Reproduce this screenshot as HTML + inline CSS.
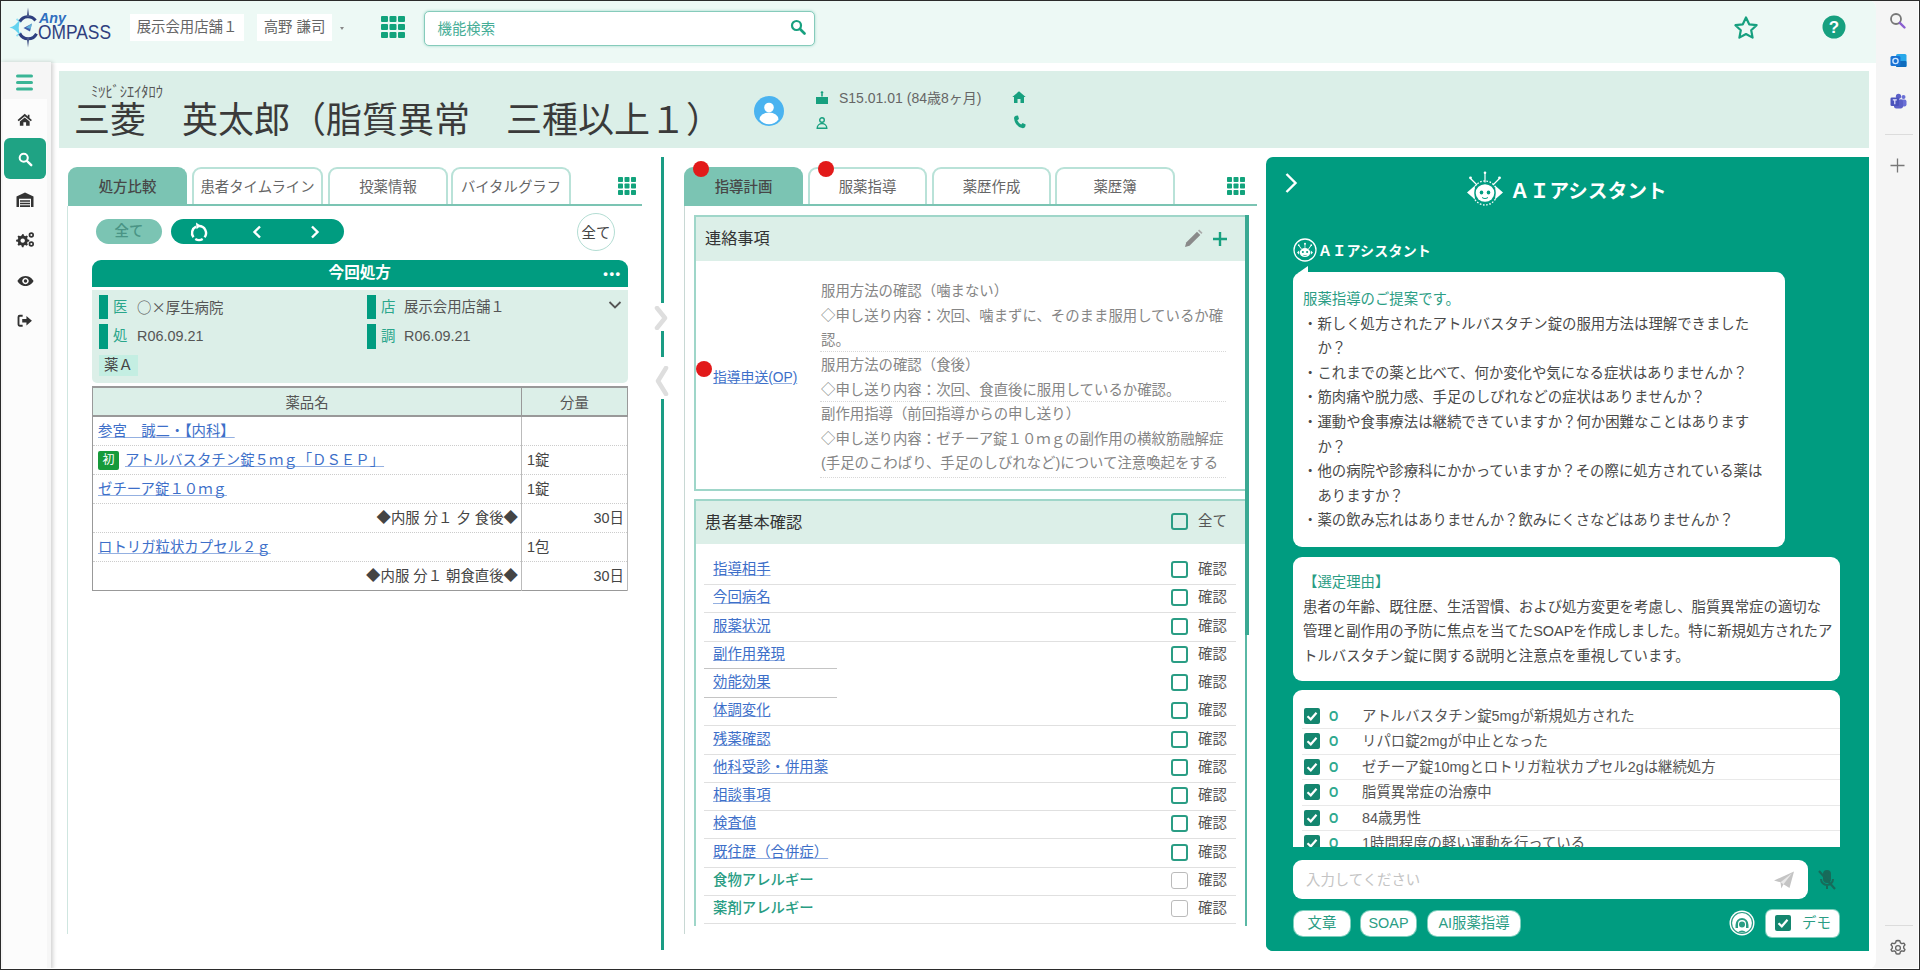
<!DOCTYPE html>
<html lang="ja">
<head>
<meta charset="utf-8">
<title>AnyCOMPASS</title>
<style>
*{box-sizing:border-box;margin:0;padding:0}
html,body{width:1920px;height:970px;overflow:hidden;background:#fff}
body{font-family:"Liberation Sans","Noto Sans CJK JP",sans-serif;color:#555;font-size:14.4px;position:relative}
.abs{position:absolute}
#frame{position:absolute;left:0;top:0;width:1920px;height:970px;border:1px solid #2b2b2b;border-top-width:1.500px;box-shadow:inset -1px -1px 0 #fff;z-index:50;pointer-events:none}
/* top bar */
#topbar{left:0;top:0;width:1876px;height:62.500px;background:#edf9f5;border-radius:0 8px 0 0}
#rightbar{left:1860px;top:0;width:60px;height:970px;background:#f5f5f5}
#pagebg{left:0;top:0;width:1876px;height:969px;background:#fff;border-radius:0 8px 8px 0}
#leftbar{left:0;top:62px;width:51px;height:908px;background:#f6f6f6;box-shadow:2px 0 4px rgba(0,0,0,.18)}
.chip{background:#fff;color:#666;font-size:14.4px;height:27px;line-height:27px;text-align:center;top:14px}
#search{left:424px;top:10.500px;width:391px;height:35.500px;border:1.500px solid #86cbbb;border-radius:5px;background:#fff;box-shadow:0 0 3px #9fd8ca}
#search span{position:absolute;left:12.500px;top:1.500px;line-height:33px;font-size:14.4px;color:#45ad96}
/* patient header */
#phead{left:59px;top:70.500px;width:1810px;height:77.500px;background:#dbefe8}
#kana{left:91px;top:82px;font-size:14.4px;color:#555;line-height:20px}
#pname{left:74px;top:95px;font-size:36px;line-height:52px;color:#3a3a3a;white-space:pre}

/* icons */
.ico{position:absolute}
#sb-active{left:4px;top:138px;width:42px;height:41px;border-radius:6px;background:#1fa384}
#sb-white{left:3px;top:99px;width:44px;height:871px;background:#fcfcfc}

/* tabs */
.tab{position:absolute;top:167px;height:38px;border:2px solid #b9e2d8;border-bottom:none;border-radius:9px 9px 0 0;background:#fff;color:#666;font-size:14.4px;text-align:center;line-height:36px;white-space:nowrap}
.tab.on{background:#7bc4b3;border-color:#7bc4b3;color:#474747;font-weight:500}
.tabline{position:absolute;top:204px;height:2px;background:#7bc4b3}
.grid9{position:absolute;width:18px;height:18px}
/* left panel */
#lp-border{left:67px;top:206px;width:1px;height:728px;background:#cfe6e0}
.pill{position:absolute;top:219px;height:25px;border-radius:13px}
#rx-head{left:92px;top:259.500px;width:535.500px;height:27px;background:#009c80;border-radius:9px 9px 0 0;color:#fff;font-weight:bold;font-size:15.600px;text-align:center;line-height:26px}
#rx-info{left:92px;top:290px;width:536px;height:93px;background:#dcefe8;border-radius:0 0 5px 5px}
.gbar{position:absolute;width:9px;height:24px;background:#009c80}
.lbl{position:absolute;font-size:14.4px;color:#2aa68b;line-height:20px}
.val{position:absolute;font-size:14.4px;color:#555;line-height:20px;white-space:nowrap}
#rx-table{left:92px;top:386px;width:536px;border-collapse:collapse;font-size:14.4px;color:#444;table-layout:fixed}
#rx-table th{background:#dcefe8;height:29px;font-weight:normal;color:#555;border:1px solid #999;border-top:2px solid #999;border-bottom:2px solid #999}
#rx-table td{height:28.700px;border-bottom:1px dotted #ccc;border-right:1px solid #bbb;padding:0 5px;white-space:nowrap;line-height:28px}
#rx-table td.r{text-align:right;padding-right:3px}
#rx-table{border:1px solid #999}
#rx-table a{color:#3d6fc9;text-decoration:underline;text-decoration-color:rgba(61,111,201,.55)}
.hatsu{display:inline-block;width:21px;height:19px;line-height:19px;background:#169a3a;color:#fff;font-size:12px;text-align:center;border-radius:2px;margin-right:6px;vertical-align:middle;position:relative;top:-1px}

/* divider */
.dv{position:absolute;left:661px;width:3px;background:#1a9c84}
/* middle panel */
.reddot{position:absolute;width:16px;height:16px;border-radius:50%;background:#e21a1a}
.sec{position:absolute;left:694px;width:553px;border:2px solid #9fd6c9;border-right:2px solid #5ab8a5;background:#fff}
.sec-h{position:absolute;left:0;top:0;right:0;height:43.500px;background:#dcefe8;color:#333;font-size:16.2px;line-height:43px;padding-left:9px}
.memo{position:absolute;left:821px;font-size:14.4px;color:#858585;white-space:nowrap;line-height:24.600px}
.dot-sep{position:absolute;left:820px;width:406px;border-top:1px dotted #d8d8d8;height:0}
.lnk{position:absolute;left:713px;font-size:14.4px;color:#3d6fc9;text-decoration:underline;text-decoration-color:rgba(61,111,201,.55);white-space:nowrap;line-height:20px}
.lnk.g{color:#2a9d84;text-decoration:none;font-weight:500}
.cb{position:absolute;left:1171px;width:17px;height:17px;border:2px solid #2a9d84;border-radius:3px;background:transparent}
.cb.gy{border:1px solid #bbb}
.kk{position:absolute;left:1198px;font-size:14.4px;color:#555;line-height:20px}
.rsep{position:absolute;left:704px;width:532px;height:1px;background:#e0e0e0}

/* AI panel */
#ai{left:1266px;top:157px;width:603px;height:794px;background:#009c80;border-radius:7px 0 0 7px}
.bub{position:absolute;background:#fff;border-radius:9px}
.ait{position:absolute;font-size:14.4px;line-height:24.600px;color:#4a4a4a;white-space:nowrap}
.ait .t{color:#2a9d84}
.ckrow{position:absolute;left:1293px;width:547px;height:25.500px}
.ckrow:after{content:"";position:absolute;left:9px;right:0;bottom:0;height:1px;background:#e9e9e9}
.ckb{position:absolute;left:11px;top:4px;width:16px;height:16px;background:#14866f;border-radius:2px}
.cko{position:absolute;left:36px;top:0;line-height:25px;color:#2fa88e;font-size:14px;font-weight:bold;transform:scaleX(.85);transform-origin:left}
.ckt{position:absolute;left:69px;top:0;line-height:25px;color:#555;font-size:14.4px;white-space:nowrap}
.aib{position:absolute;top:911px;height:25px;background:#fff;border-radius:9px;color:#2a9d84;font-size:14.4px;line-height:24px;text-align:center;box-shadow:0 0 0 1px #7fcfbd}
</style>
</head>
<body>
<div id="rightbar" class="abs"></div>
<div id="pagebg" class="abs"></div>
<div id="topbar" class="abs"></div>
<div id="leftbar" class="abs"></div>


<!-- LEFT SIDEBAR -->
<div id="sb-white" class="abs"></div>
<svg class="ico" style="left:16px;top:74px" width="17" height="17" viewBox="0 0 17 17"><g fill="#3bb596"><rect x="0" y="0.5" width="17" height="3" rx="1.5"/><rect x="0" y="7" width="17" height="3" rx="1.5"/><rect x="0" y="13.5" width="17" height="3" rx="1.5"/></g></svg>
<svg class="ico" style="left:17px;top:113px" width="15.500" height="13.500" viewBox="0 0 18 16"><path d="M9 1 L0.5 8.3 L1.8 9.8 L9 3.8 L16.2 9.8 L17.5 8.3 L14.6 5.8 V2 H12.6 V4.1 Z" fill="#333"/><path d="M9 5.3 L3.2 10.1 V15 H7.4 V11 H10.6 V15 H14.8 V10.1 Z" fill="#333"/></svg>
<div id="sb-active" class="abs"></div>
<svg class="ico" style="left:17.500px;top:152px" width="15" height="15" viewBox="0 0 17 17"><circle cx="6.5" cy="6.5" r="4.6" fill="none" stroke="#fff" stroke-width="2.3"/><path d="M10.2 10.2 L15 15" stroke="#fff" stroke-width="2.8" stroke-linecap="round"/></svg>
<svg class="ico" style="left:16px;top:192px" width="18" height="15.500" viewBox="0 0 18 17" preserveAspectRatio="none"><path d="M9 0.5 L0.5 5 V16.5 H3 V7.5 H15 V16.5 H17.5 V5 Z" fill="#333"/><path d="M4 9 H14 V10.6 H4 Z M4 11.8 H14 V13.4 H4 Z M4 14.6 H14 V16.5 H4 Z" fill="#333"/></svg>
<svg class="ico" style="left:16px;top:231px" width="19" height="17" viewBox="0 0 19 17"><g fill="#333"><path d="M6.5 3 l1 0 l.4 1.6 l1.3 .6 l1.5 -.8 l1.2 1.2 l-.8 1.5 l.6 1.3 l1.6 .4 v1.6 l-1.6 .4 l-.6 1.3 l.8 1.5 l-1.2 1.2 l-1.5 -.8 l-1.3 .6 l-.4 1.6 h-1.6 l-.4 -1.6 l-1.3 -.6 l-1.5 .8 l-1.2 -1.2 l.8 -1.5 l-.6 -1.3 l-1.6 -.4 v-1.6 l1.600 -.4 l.6 -1.3 l-.8 -1.5 l1.2 -1.2 l1.500 .8 l1.300 -.6 z M6.700 7.400 a2.200 2.200 0 1 0 .01 0 z" fill-rule="evenodd"/><circle cx="15.300" cy="4" r="2.700"/><circle cx="15.300" cy="13" r="2.700"/></g><circle cx="15.300" cy="4" r="1" fill="#fcfcfc"/><circle cx="15.300" cy="13" r="1" fill="#fcfcfc"/></svg>
<svg class="ico" style="left:16.500px;top:274.500px" width="17" height="12" viewBox="0 0 20 14"><path d="M10 1 C5 1 1.800 4.500 0.500 7 C1.800 9.500 5 13 10 13 C15 13 18.200 9.500 19.500 7 C18.200 4.500 15 1 10 1 Z M10 3.200 a3.800 3.800 0 1 1 -.01 0 Z" fill="#333" fill-rule="evenodd"/><circle cx="10" cy="7" r="2" fill="#333"/></svg>
<svg class="ico" style="left:16.500px;top:314px" width="15.500" height="13.500" viewBox="0 0 18 16"><path d="M6.500 1 H3 a2.500 2.500 0 0 0 -2.500 2.500 V12.500 A2.500 2.500 0 0 0 3 15 H6.500 V12.800 H3.300 a.6 .6 0 0 1 -.6 -.6 V3.800 a.6 .6 0 0 1 .6 -.6 H6.500 Z" fill="#333"/><path d="M11 2.500 L17.500 8 L11 13.500 V10 H6 V6 H11 Z" fill="#333"/></svg>
<!-- TOPBAR CONTENT -->
<div class="abs chip" style="left:130px;width:114px">展示会用店舗１</div>
<div class="abs chip" style="left:257px;width:75px">高野 謙司</div>
<div class="abs" style="left:340px;top:27px;width:0;height:0;border-left:2.500px solid transparent;border-right:2.500px solid transparent;border-top:3.500px solid #888"></div>

<!-- logo -->
<svg class="ico" style="left:8px;top:6px" width="108" height="44" viewBox="0 0 108 44">
 <path d="M1.500 21.500 Q8 20 11.500 13.500 Q10 21.500 11.500 29.500 Q8 23 1.500 21.500 Z" fill="#63d3f0"/>
 <path d="M8.500 13 l4.500 3.500 M8.500 30 l4.500 -3.500" stroke="#8fe0f4" stroke-width="1.800"/>
 <g fill="none" stroke="#2f3f7f" stroke-width="3">
  <path d="M11.800 15.500 A9.300 9.300 0 0 1 27.500 14.500"/>
  <path d="M11.800 27.500 A9.300 9.300 0 0 0 28.500 27.800"/>
 </g>
 <path d="M20 1.500 L21.300 11 L18.700 11 Z M20 41.500 L21.300 32 L18.700 32 Z" fill="#4a5a8a"/>
 <path d="M15.500 22 l8.500 -4.500 l-2 8 z" fill="#3f5fa8"/>
 <path d="M18 21.500 l6 -4 l-1.500 5.500 z" fill="#6fd6f0" opacity=".7"/>
 <text x="31" y="16.500" font-family="Liberation Sans, sans-serif" font-size="14" font-weight="bold" font-style="italic" fill="#2f6fc0" textLength="27" lengthAdjust="spacingAndGlyphs">Any</text>
 <text x="30" y="32.500" font-family="Liberation Sans, sans-serif" font-size="21" fill="#2f3f7f" textLength="73" lengthAdjust="spacingAndGlyphs">OMPASS</text>
</svg>
<!-- grid icon -->
<svg class="ico" style="left:381px;top:16px" width="24" height="22" viewBox="0 0 24 22"><g fill="#12a37c">
<rect x="0" y="0" width="7" height="6" rx="1"/><rect x="8.5" y="0" width="7" height="6" rx="1"/><rect x="17" y="0" width="7" height="6" rx="1"/>
<rect x="0" y="8" width="7" height="6" rx="1"/><rect x="8.5" y="8" width="7" height="6" rx="1"/><rect x="17" y="8" width="7" height="6" rx="1"/>
<rect x="0" y="16" width="7" height="6" rx="1"/><rect x="8.5" y="16" width="7" height="6" rx="1"/><rect x="17" y="16" width="7" height="6" rx="1"/></g></svg>
<!-- star -->
<svg class="ico" style="left:1733px;top:15px" width="26" height="25" viewBox="0 0 26 25"><path d="M13 2.5 L16.2 9.3 L23.6 10.2 L18.2 15.3 L19.6 22.6 L13 19 L6.4 22.6 L7.8 15.3 L2.4 10.2 L9.8 9.3 Z" fill="none" stroke="#17a07f" stroke-width="2.2" stroke-linejoin="round"/></svg>
<!-- help -->
<svg class="ico" style="left:1822px;top:15px" width="24" height="24" viewBox="0 0 24 24"><circle cx="12" cy="12" r="11.5" fill="#17a07f"/><text x="12" y="18" text-anchor="middle" font-family="Liberation Sans, sans-serif" font-weight="bold" font-size="17" fill="#fff">?</text></svg>
<div id="search" class="abs"><span>機能検索</span></div>
<!-- search icon in box -->
<svg class="ico" style="left:790px;top:19px" width="16" height="16" viewBox="0 0 16 16"><circle cx="6.5" cy="6.5" r="4.5" fill="none" stroke="#17a07f" stroke-width="2.2"/><path d="M10 10 L14.5 14.5" stroke="#17a07f" stroke-width="2.6" stroke-linecap="round"/></svg>



<!-- RIGHT BROWSER BAR -->
<svg class="ico" style="left:1889px;top:12px" width="18" height="18" viewBox="0 0 18 18"><circle cx="7" cy="7" r="5" fill="none" stroke="#777" stroke-width="1.800"/><path d="M10.800 10.800 L15.500 15.500" stroke="#8a5fd0" stroke-width="2.400" stroke-linecap="round"/></svg>
<svg class="ico" style="left:1890px;top:53px" width="17" height="16" viewBox="0 0 17 16"><rect x="6" y="1" width="10.500" height="13" rx="1.500" fill="#28a8ea"/><rect x="6" y="8" width="10.500" height="6" rx="1" fill="#0f6cbd"/><rect x="0.500" y="3" width="10" height="10" rx="1.500" fill="#1a73d4"/><circle cx="5.500" cy="8" r="2.600" fill="none" stroke="#cfe6ff" stroke-width="1.400"/></svg>
<svg class="ico" style="left:1890px;top:93px" width="17" height="16" viewBox="0 0 17 16"><circle cx="13.500" cy="4" r="2" fill="#6a6fd6"/><circle cx="8.500" cy="3.300" r="2.600" fill="#5b5fc7"/><rect x="9" y="6.500" width="7.500" height="7" rx="2" fill="#6a6fd6"/><rect x="4" y="6.500" width="9" height="9" rx="2.200" fill="#5b5fc7"/><rect x="0.500" y="4.500" width="8.500" height="8.500" rx="1.300" fill="#4b53bc"/><path d="M2.800 6.800 h4 M4.800 6.800 v4.500" stroke="#e8e8ff" stroke-width="1.200"/></svg>
<div class="abs" style="left:1885px;top:134px;width:28px;height:1px;background:#dcdcdc"></div>
<svg class="ico" style="left:1890px;top:158px" width="15" height="15" viewBox="0 0 15 15"><path d="M7.500 0.500 V14.500 M0.500 7.500 H14.500" stroke="#777" stroke-width="1.300"/></svg>
<div class="abs" style="left:1885px;top:925px;width:28px;height:1px;background:#dcdcdc"></div>
<svg class="ico" style="left:1889px;top:939px" width="18" height="18" viewBox="0 0 18 18"><path d="M9 1.500 l1.800 .3 l.6 2 l1.500 .9 l2 -.6 l1.100 1.700 l-1.300 1.600 v1.700 l1.300 1.600 l-1.100 1.700 l-2 -.6 l-1.500 .9 l-.6 2 l-1.800 .3 l-1.800 -.3 l-.6 -2 l-1.500 -.9 l-2 .6 l-1.100 -1.700 l1.300 -1.600 v-1.700 l-1.300 -1.600 l1.100 -1.700 l2 .6 l1.500 -.9 l.6 -2 z" fill="none" stroke="#666" stroke-width="1.400" stroke-linejoin="round"/><circle cx="9" cy="9" r="2.400" fill="none" stroke="#666" stroke-width="1.300"/></svg>
<!-- PATIENT HEADER -->
<div id="phead" class="abs"></div>
<div id="kana" class="abs">ﾐﾂﾋﾞｼｴｲﾀﾛｳ</div>
<div id="pname" class="abs">三菱　英太郎（脂質異常　三種以上１）</div>


<svg class="ico" style="left:754px;top:96px" width="30" height="30" viewBox="0 0 30 30"><circle cx="15" cy="15" r="15" fill="#4ab3f0"/><circle cx="15" cy="11.500" r="4.800" fill="#fff"/><path d="M5.500 23.500 a9.500 7 0 0 1 19 0 a12 12 0 0 1 -19 0z" fill="#fff"/></svg>
<svg class="ico" style="left:815px;top:91px" width="14" height="13" viewBox="0 0 14 13"><path d="M1 6 h12 v7 h-12z M6.200 2.500 h1.600 v3 h-1.600z" fill="#17a07f"/><circle cx="7" cy="1.500" r="1.300" fill="#17a07f"/></svg>
<div class="abs" style="left:839px;top:88px;font-size:14px;color:#666;line-height:20px;white-space:nowrap">S15.01.01 (84歳8ヶ月)</div>
<svg class="ico" style="left:816px;top:117px" width="12" height="12" viewBox="0 0 12 12"><circle cx="6" cy="3" r="2.300" fill="none" stroke="#17a07f" stroke-width="1.400"/><path d="M1.200 11.300 a4.800 4.800 0 0 1 9.600 0z" fill="none" stroke="#17a07f" stroke-width="1.400"/></svg>
<svg class="ico" style="left:1012px;top:91px" width="14" height="12" viewBox="0 0 14 12"><path d="M7 0.300 L0.300 6 H2 V12 H5.500 V8 H8.500 V12 H12 V6 H13.700 Z" fill="#17a07f"/></svg>
<svg class="ico" style="left:1013px;top:115px" width="13" height="14" viewBox="0 0 13 14"><path d="M2.800 0.800 L5 0.500 L6 4 L4.300 5.200 Q5.500 8 8.200 9.600 L9.600 8 L12.700 9.500 L12.200 11.800 Q11.500 13.300 9.800 13.200 Q2 11.500 1 3 Q1 1.500 2.800 .8z" fill="#17a07f"/></svg>

<!-- LEFT PANEL -->
<div class="tab on" style="left:68px;width:119px">処方比較</div>
<div class="tab" style="left:192px;width:131px">患者タイムライン</div>
<div class="tab" style="left:328px;width:120px">投薬情報</div>
<div class="tab" style="left:451px;width:120px">バイタルグラフ</div>
<svg class="grid9" style="left:618px;top:177px" viewBox="0 0 18 18"><g fill="#12a37c"><rect x="0" y="0" width="5" height="5" rx=".8"/><rect x="6.500" y="0" width="5" height="5" rx=".8"/><rect x="13" y="0" width="5" height="5" rx=".8"/><rect x="0" y="6.500" width="5" height="5" rx=".8"/><rect x="6.500" y="6.500" width="5" height="5" rx=".8"/><rect x="13" y="6.500" width="5" height="5" rx=".8"/><rect x="0" y="13" width="5" height="5" rx=".8"/><rect x="6.500" y="13" width="5" height="5" rx=".8"/><rect x="13" y="13" width="5" height="5" rx=".8"/></g></svg>
<div class="tabline" style="left:68px;width:574px"></div>
<div id="lp-border" class="abs"></div>
<div class="pill" style="left:96px;width:66px;background:#7bc4b3;color:#4a9485;font-weight:500;font-size:14.4px;text-align:center;line-height:25px">全て</div>
<div class="pill" style="left:171px;width:173px;background:#009c80"></div>
<svg class="ico" style="left:188px;top:222px" width="22" height="22" viewBox="0 0 22 22"><g fill="none" stroke="#fff" stroke-width="2.400"><path d="M11.00 4.00 A7 7 0 0 1 16.52 15.31"/><path d="M14.71 16.94 A7 7 0 0 1 7.29 16.94"/><path d="M5.48 15.31 A7 7 0 0 1 8.04 4.66"/></g><path d="M8 0.600 L12.800 3.700 L8.500 7.200 Z" fill="#fff"/></svg>
<svg class="ico" style="left:252px;top:225px" width="10" height="14" viewBox="0 0 10 14"><path d="M8 1.500 L2.500 7 L8 12.500" fill="none" stroke="#fff" stroke-width="2.400"/></svg>
<svg class="ico" style="left:310px;top:225px" width="10" height="14" viewBox="0 0 10 14"><path d="M2 1.500 L7.500 7 L2 12.500" fill="none" stroke="#fff" stroke-width="2.400"/></svg>
<div class="abs" style="left:577px;top:213px;width:38px;height:38px;border-radius:50%;border:1.500px solid #b3ddd3;background:#fff;color:#444;font-size:14.4px;text-align:center;line-height:38px">全て</div>
<div id="rx-head" class="abs">今回処方<span style="position:absolute;right:6px;top:1px;font-size:13px;letter-spacing:1.500px">•••</span></div>
<div id="rx-info" class="abs"></div>
<div class="gbar" style="left:99px;top:295px"></div><div class="lbl" style="left:113px;top:297px">医</div><div class="val" style="left:137px;top:297px"><span style="font-family:'Noto Sans CJK JP',sans-serif;font-feature-settings:'fwid'">○×</span>厚生病院</div>
<div class="gbar" style="left:99px;top:323.500px;height:25.500px"></div><div class="lbl" style="left:113px;top:326px">処</div><div class="val" style="left:137px;top:326px">R06.09.21</div>
<div class="gbar" style="left:367px;top:295px"></div><div class="lbl" style="left:381px;top:297px">店</div><div class="val" style="left:404px;top:297px">展示会用店舗１</div>
<div class="gbar" style="left:367px;top:323.500px;height:25.500px"></div><div class="lbl" style="left:381px;top:326px">調</div><div class="val" style="left:404px;top:326px">R06.09.21</div>
<svg class="ico" style="left:608px;top:300px" width="14" height="10" viewBox="0 0 14 10"><path d="M1.500 2 L7 7.500 L12.500 2" fill="none" stroke="#555" stroke-width="1.800"/></svg>
<div class="abs" style="left:99px;top:355px;width:39px;height:21px;background:#c4eee2;color:#444;font-size:14.4px;line-height:21px;text-align:center">薬Ａ</div>
<table id="rx-table" class="abs">
<colgroup><col style="width:429px"><col></colgroup>
<tr><th>薬品名</th><th>分量</th></tr>
<tr><td><a>参宮　誠二・【内科】</a></td><td></td></tr>
<tr><td><span class="hatsu">初</span><a>アトルバスタチン錠５ｍｇ「ＤＳＥＰ」</a></td><td>1錠</td></tr>
<tr><td><a>ゼチーア錠１０ｍｇ</a></td><td>1錠</td></tr>
<tr><td class="r">◆内服 分１ 夕 食後◆</td><td class="r">30日</td></tr>
<tr><td><a>ロトリガ粒状カプセル２ｇ</a></td><td>1包</td></tr>
<tr><td class="r">◆内服 分１ 朝食直後◆</td><td class="r">30日</td></tr>
</table>


<!-- DIVIDER -->
<div class="dv" style="top:157px;height:146px"></div>
<div class="dv" style="top:331px;height:26px"></div>
<div class="dv" style="top:399px;height:551px"></div>
<svg class="ico" style="left:654px;top:306px" width="16" height="24" viewBox="0 0 16 24"><path d="M3 2 L11 12 L3 22" fill="none" stroke="#dedede" stroke-width="4.500" stroke-linejoin="round" stroke-linecap="round"/></svg>
<svg class="ico" style="left:654px;top:366px" width="16" height="30" viewBox="0 0 16 30"><path d="M12 2 L4 15 L12 28" fill="none" stroke="#dedede" stroke-width="4.500" stroke-linejoin="round" stroke-linecap="round"/></svg>
<!-- MIDDLE PANEL -->
<div class="tab on" style="left:684px;width:119px">指導計画</div>
<div class="tab" style="left:808px;width:119px">服薬指導</div>
<div class="tab" style="left:932px;width:119px">薬歴作成</div>
<div class="tab" style="left:1055px;width:120px">薬歴簿</div>
<svg class="grid9" style="left:1227px;top:177px" viewBox="0 0 18 18"><g fill="#12a37c"><rect x="0" y="0" width="5" height="5" rx=".8"/><rect x="6.500" y="0" width="5" height="5" rx=".8"/><rect x="13" y="0" width="5" height="5" rx=".8"/><rect x="0" y="6.500" width="5" height="5" rx=".8"/><rect x="6.500" y="6.500" width="5" height="5" rx=".8"/><rect x="13" y="6.500" width="5" height="5" rx=".8"/><rect x="0" y="13" width="5" height="5" rx=".8"/><rect x="6.500" y="13" width="5" height="5" rx=".8"/><rect x="13" y="13" width="5" height="5" rx=".8"/></g></svg>
<div class="tabline" style="left:684px;width:573px"></div>
<div class="abs" style="left:684px;top:206px;width:1px;height:728px;background:#c8d8d4"></div>
<div class="reddot" style="left:693px;top:161px"></div>
<div class="reddot" style="left:818px;top:161px"></div>
<div class="sec" style="top:215px;height:275.500px"><div class="sec-h">連絡事項</div></div>
<svg class="ico" style="left:1183px;top:229px" width="20" height="20" viewBox="0 0 20 20"><path d="M2 18 L3.200 13.500 L14 2.700 L17.300 6 L6.500 16.800 Z" fill="#8a8a8a"/><path d="M15 1.700 l1.200 -1.200 l3.300 3.300 l-1.200 1.200 z" fill="#aaa"/></svg>
<svg class="ico" style="left:1212px;top:231px" width="16" height="16" viewBox="0 0 16 16"><path d="M8 1 V15 M1 8 H15" stroke="#17a07f" stroke-width="2.400"/></svg>
<div class="memo" style="top:279px">服用方法の確認（噛まない）<br>◇申し送り内容：次回、噛まずに、そのまま服用しているか確<br>認。</div>
<div class="dot-sep" style="top:351px"></div>
<div class="memo" style="top:353px">服用方法の確認（食後）<br>◇申し送り内容：次回、食直後に服用しているか確認。</div>
<div class="dot-sep" style="top:401px"></div>
<div class="memo" style="top:402px">副作用指導（前回指導からの申し送り）<br>◇申し送り内容：ゼチーア錠１０ｍｇの副作用の横紋筋融解症<br>(手足のこわばり、手足のしびれなど)について注意喚起をする</div>
<div class="dot-sep" style="top:477px"></div>
<div class="reddot" style="left:696px;top:361px"></div>
<div class="lnk" style="top:368px;font-size:13.800px">指導申送(OP)</div>

<div class="sec" style="top:498.500px;height:440px;border-bottom:none"><div class="sec-h">患者基本確認</div></div>
<div class="abs" style="left:1244.500px;top:214.500px;width:4px;height:420.500px;background:#3aa993"></div>
<div class="cb" style="top:512.500px"></div><div class="kk" style="top:511px">全て</div>
<div class="lnk" style="top:559.0px">指導相手</div><div class="cb" style="top:561.0px"></div><div class="kk" style="top:559.0px">確認</div><div class="rsep" style="top:584.0px"></div>
<div class="lnk" style="top:587.2px">今回病名</div><div class="cb" style="top:589.2px"></div><div class="kk" style="top:587.2px">確認</div><div class="rsep" style="top:612.2px"></div>
<div class="lnk" style="top:615.5px">服薬状況</div><div class="cb" style="top:617.5px"></div><div class="kk" style="top:615.5px">確認</div><div class="rsep" style="top:640.5px"></div>
<div class="lnk" style="top:643.8px">副作用発現</div><div class="cb" style="top:645.8px"></div><div class="kk" style="top:643.8px">確認</div>
<div class="lnk" style="top:672.0px">効能効果</div><div class="cb" style="top:674.0px"></div><div class="kk" style="top:672.0px">確認</div>
<div class="lnk" style="top:700.2px">体調変化</div><div class="cb" style="top:702.2px"></div><div class="kk" style="top:700.2px">確認</div><div class="rsep" style="top:725.2px"></div>
<div class="lnk" style="top:728.5px">残薬確認</div><div class="cb" style="top:730.5px"></div><div class="kk" style="top:728.5px">確認</div><div class="rsep" style="top:753.5px"></div>
<div class="lnk" style="top:756.8px">他科受診・併用薬</div><div class="cb" style="top:758.8px"></div><div class="kk" style="top:756.8px">確認</div><div class="rsep" style="top:781.8px"></div>
<div class="lnk" style="top:785.0px">相談事項</div><div class="cb" style="top:787.0px"></div><div class="kk" style="top:785.0px">確認</div><div class="rsep" style="top:810.0px"></div>
<div class="lnk" style="top:813.2px">検査値</div><div class="cb" style="top:815.2px"></div><div class="kk" style="top:813.2px">確認</div><div class="rsep" style="top:838.2px"></div>
<div class="lnk" style="top:841.5px">既往歴（合併症）</div><div class="cb" style="top:843.5px"></div><div class="kk" style="top:841.5px">確認</div><div class="rsep" style="top:866.5px"></div>
<div class="lnk g" style="top:869.8px">食物アレルギー</div><div class="cb gy" style="top:871.8px"></div><div class="kk" style="top:869.8px">確認</div><div class="rsep" style="top:894.8px"></div>
<div class="lnk g" style="top:898.0px">薬剤アレルギー</div><div class="cb gy" style="top:900.0px"></div><div class="kk" style="top:898.0px">確認</div><div class="rsep" style="top:923.0px"></div>
<div class="abs" style="left:704px;top:668px;width:133px;height:1px;background:#c4c4c4"></div><div class="abs" style="left:704px;top:697px;width:133px;height:1px;background:#c4c4c4"></div>
<div class="abs" style="left:690px;top:925.500px;width:570px;height:44px;background:#fff"></div>


<!-- AI PANEL -->
<div id="ai" class="abs"></div>
<svg class="ico" style="left:1284px;top:172px" width="14" height="22" viewBox="0 0 14 22"><path d="M2.500 2 L11.500 11 L2.500 20" fill="none" stroke="#fff" stroke-width="2.400"/></svg>
<svg class="ico" style="left:1466px;top:171px" width="38" height="35" viewBox="0 0 38 35"><g fill="#fff"><ellipse cx="19" cy="22" rx="9.300" ry="8.800"/><path d="M18.400 1.500 h1.200 v10 h-1.200z"/><circle cx="19" cy="1.800" r="1.300"/><path d="M4.500 6.500 l7 7 l-.9 .9 l-7 -7z M33.500 6.500 l-7 7 l.9 .9 l7 -7z"/><circle cx="4.500" cy="6.800" r="1.400"/><circle cx="33.500" cy="6.800" r="1.400"/><path d="M1 21.500 L9 14.500 Q7.500 21.500 9 28.500 Z M37 21.500 L29 14.500 Q30.500 21.500 29 28.500 Z"/></g><circle cx="19" cy="22" r="12" fill="none" stroke="#fff" stroke-width="1.300" stroke-dasharray="1.600 1.600"/><g fill="#009c80"><ellipse cx="15.500" cy="21.500" rx="1.800" ry="2.100"/><ellipse cx="22.500" cy="21.500" rx="1.800" ry="2.100"/><path d="M16 26 q3 2 6 0 v1 q-3 2 -6 0z"/></g></svg>
<div class="abs" style="left:1510px;top:177px;font-size:19.500px;font-weight:bold;color:#fff;line-height:28px;white-space:nowrap;letter-spacing:.2px">ＡＩアシスタント</div>
<svg class="ico" style="left:1293px;top:238px" width="24" height="24" viewBox="0 0 24 24"><circle cx="12" cy="12" r="11" fill="none" stroke="#fff" stroke-width="1.300"/><g transform="translate(3.500,4.500) scale(.53)"><g fill="#fff"><ellipse cx="16" cy="19" rx="10" ry="8.500"/><path d="M15.300 2 h1.400 v9 h-1.400z"/><circle cx="16" cy="2.500" r="1.800"/><path d="M5 5 l5 7 l-1.200 .9 l-5 -7z M27 5 l-5 7 l1.200 .9 l5 -7z"/><circle cx="4.200" cy="5" r="1.600"/><circle cx="27.800" cy="5" r="1.600"/><path d="M1 19 l4 -4 v8z M31 19 l-4 -4 v8z"/></g><g fill="#009c80"><circle cx="12" cy="18" r="2"/><circle cx="20" cy="18" r="2"/><path d="M12.500 23 q3.500 2.500 7 0 v1.200 q-3.500 2.500 -7 0z"/></g></g></svg>
<div class="abs" style="left:1318px;top:241px;font-size:14px;font-weight:bold;color:#fff;line-height:20px;white-space:nowrap;letter-spacing:.2px">ＡＩアシスタント</div>
<div class="abs" style="left:1298px;top:266px;width:0;height:0;border-right:10px solid #fff;border-top:7px solid transparent"></div>
<div class="bub" style="left:1293px;top:272px;width:492px;height:275px"></div>
<div class="ait" style="left:1303px;top:287px"><span class="t">服薬指導のご提案です。</span><br>・新しく処方されたアトルバスタチン錠の服用方法は理解できました<br>　か？<br>・これまでの薬と比べて、何か変化や気になる症状はありませんか？<br>・筋肉痛や脱力感、手足のしびれなどの症状はありませんか？<br>・運動や食事療法は継続できていますか？何か困難なことはあります<br>　か？<br>・他の病院や診療科にかかっていますか？その際に処方されている薬は<br>　ありますか？<br>・薬の飲み忘れはありませんか？飲みにくさなどはありませんか？</div>
<div class="bub" style="left:1293px;top:557px;width:547px;height:124px"></div>
<div class="ait" style="left:1303px;top:570px"><span class="t">【選定理由】</span><br>患者の年齢、既往歴、生活習慣、および処方変更を考慮し、脂質異常症の適切な<br>管理と副作用の予防に焦点を当てたSOAPを作成しました。特に新規処方されたア<br>トルバスタチン錠に関する説明と注意点を重視しています。</div>
<div class="bub" style="left:1293px;top:690px;width:547px;height:170px"></div>
<div class="ckrow" style="top:703.5px"><div class="ckb"><svg width="16" height="16" viewBox="0 0 16 16"><path d="M3.500 8.200 L6.800 11.300 L12.500 4.800" fill="none" stroke="#fff" stroke-width="2.200"/></svg></div><div class="cko">O</div><div class="ckt">アトルバスタチン錠5mgが新規処方された</div></div>
<div class="ckrow" style="top:729.0px"><div class="ckb"><svg width="16" height="16" viewBox="0 0 16 16"><path d="M3.500 8.200 L6.800 11.300 L12.500 4.800" fill="none" stroke="#fff" stroke-width="2.200"/></svg></div><div class="cko">O</div><div class="ckt">リパロ錠2mgが中止となった</div></div>
<div class="ckrow" style="top:754.5px"><div class="ckb"><svg width="16" height="16" viewBox="0 0 16 16"><path d="M3.500 8.200 L6.800 11.300 L12.500 4.800" fill="none" stroke="#fff" stroke-width="2.200"/></svg></div><div class="cko">O</div><div class="ckt">ゼチーア錠10mgとロトリガ粒状カプセル2gは継続処方</div></div>
<div class="ckrow" style="top:780.0px"><div class="ckb"><svg width="16" height="16" viewBox="0 0 16 16"><path d="M3.500 8.200 L6.800 11.300 L12.500 4.800" fill="none" stroke="#fff" stroke-width="2.200"/></svg></div><div class="cko">O</div><div class="ckt">脂質異常症の治療中</div></div>
<div class="ckrow" style="top:805.5px"><div class="ckb"><svg width="16" height="16" viewBox="0 0 16 16"><path d="M3.500 8.200 L6.800 11.300 L12.500 4.800" fill="none" stroke="#fff" stroke-width="2.200"/></svg></div><div class="cko">O</div><div class="ckt">84歳男性</div></div>
<div class="ckrow" style="top:831.0px"><div class="ckb"><svg width="16" height="16" viewBox="0 0 16 16"><path d="M3.500 8.200 L6.800 11.300 L12.500 4.800" fill="none" stroke="#fff" stroke-width="2.200"/></svg></div><div class="cko">O</div><div class="ckt">1時間程度の軽い運動を行っている</div></div>
<div class="abs" style="left:1266px;top:847px;width:603px;height:104px;background:#009c80;border-radius:0 0 0 7px"></div>
<div class="bub" style="left:1293px;top:860px;width:515px;height:39px"></div>
<div class="abs" style="left:1306px;top:870px;font-size:14.4px;color:#c4c4c4;line-height:20px">入力してください</div>
<svg class="ico" style="left:1773px;top:870px" width="22" height="20" viewBox="0 0 22 20"><path d="M1 10.500 L21 1.500 L16.500 18 L10.500 14.200 L8.300 18.500 L7.500 12.300 Z" fill="#c4c4c4"/><path d="M7.500 12.300 L19 3.200 L10.500 14.200" fill="#e9e9e9"/></svg>
<svg class="ico" style="left:1816px;top:869px" width="22" height="22" viewBox="0 0 22 22"><g fill="none" stroke="#176b5a" stroke-width="2"><rect x="8" y="2" width="6" height="11" rx="3" fill="#176b5a"/><path d="M5 10 a6 6 0 0 0 12 0 M11 16 v4"/><path d="M3 2 L19 20" stroke-width="2.200"/></g></svg>
<div class="aib" style="left:1294px;width:56px">文章</div>
<div class="aib" style="left:1361px;width:55px">SOAP</div>
<div class="aib" style="left:1428px;width:92px">AI服薬指導</div>
<svg class="ico" style="left:1729px;top:910px" width="26" height="26" viewBox="0 0 26 26"><circle cx="13" cy="13" r="12.500" fill="#fff"/><circle cx="13" cy="13" r="10.500" fill="none" stroke="#2a9d84" stroke-width="1.200"/><path d="M6.500 15 a6.500 7 0 0 1 13 0 v3 h-2.500 v-4 a4 4 0 0 0 -8 0 v4 h-2.500z" fill="#2a9d84"/><circle cx="13" cy="14.500" r="3" fill="#2a9d84"/><path d="M8.500 22.500 q4.500 -4 9 0z" fill="#2a9d84"/></svg>
<div class="aib" style="left:1766px;top:910px;width:73px;height:27px;border-radius:6px;line-height:26px;text-align:left;padding-left:36px">デモ</div>
<div class="abs" style="left:1775px;top:915px;width:16px;height:16px;background:#14866f;border-radius:2px"><svg width="16" height="16" viewBox="0 0 16 16"><path d="M3.500 8.200 L6.800 11.300 L12.500 4.800" fill="none" stroke="#fff" stroke-width="2.200"/></svg></div>

<div id="frame"></div>
</body>
</html>
